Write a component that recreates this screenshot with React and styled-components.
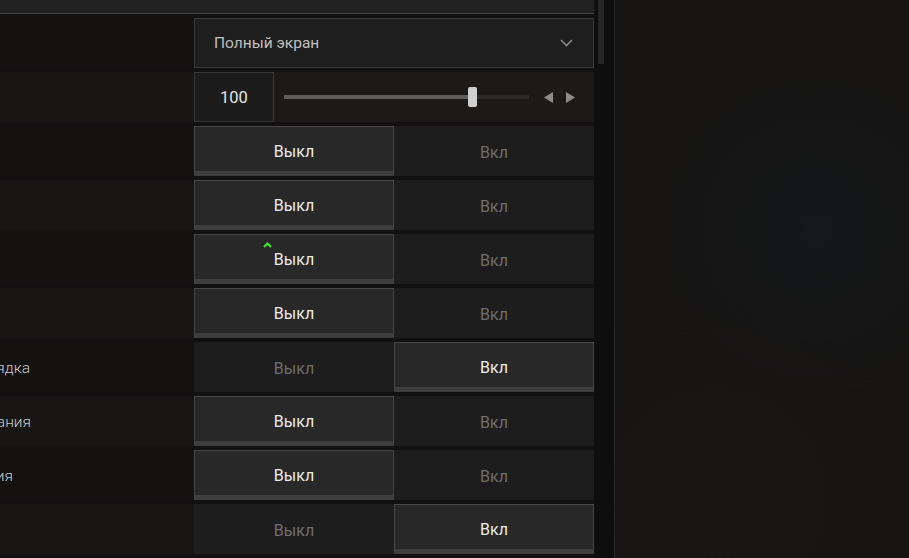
import styled, { createGlobalStyle } from 'styled-components';

const toggles = [
    { label: 'Ограничение частоты кадров', end: 30, on: false, hidden: true },
    { label: 'Тени', end: 30, on: false, hidden: true },
    { label: 'Подсказки', end: 30, on: false, hidden: true, cursor: true },
    { label: 'Эффекты', end: 30, on: false, hidden: true },
    { label: 'Быстрая перезарядка', end: 30, on: true },
    { label: 'Подсветка прицеливания', end: 31, on: false },
    { label: 'Анимация', end: 13, on: false },
    { label: 'Автоподбор', end: 30, on: true, hidden: true },
];

export default function App() {
    return (
        <>
            <GlobalStyle />
            <Page>
                <Panel>
                    <Header />
                    <List>
                        <Row>
                            <Label />
                            <Select>
                                <span>Полный экран</span>
                                <svg width="13" height="8" viewBox="0 0 13 8">
                                    <path d="M1 1l5.5 5.5L12 1" fill="none" stroke="#8a8a8a" strokeWidth="1.6" />
                                </svg>
                            </Select>
                        </Row>
                        <Row alt>
                            <Label />
                            <SliderBox>
                                <NumberBox>100</NumberBox>
                                <Track>
                                    <Fill style={{ width: `${(188 / 245) * 100}%` }} />
                                    <Thumb style={{ left: `${(184 / 245) * 100}%` }} />
                                </Track>
                                <Arrows>
                                    <svg width="10" height="11" viewBox="0 0 10 11">
                                        <path d="M9 0v11L0 5.5z" fill="#8c8c8c" />
                                    </svg>
                                    <svg width="10" height="11" viewBox="0 0 10 11">
                                        <path d="M1 0v11l9-5.5z" fill="#8c8c8c" />
                                    </svg>
                                </Arrows>
                            </SliderBox>
                        </Row>
                        {toggles.map((t, i) => (
                            <Row key={i} alt={i % 2 === 1}>
                                <Label end={t.end}>{t.hidden ? '' : t.label}</Label>
                                <Toggle>
                                    <Half active={!t.on}>
                                        {t.cursor && (
                                            <Caret width="9" height="6" viewBox="0 0 9 6">
                                                <path d="M1 5l3.5-3.5L8 5" fill="none" stroke="#3cf01e" strokeWidth="2" />
                                            </Caret>
                                        )}
                                        Выкл
                                    </Half>
                                    <Half active={t.on}>Вкл</Half>
                                </Toggle>
                            </Row>
                        ))}
                    </List>
                </Panel>
                <Scroll>
                    <ScrollThumb />
                </Scroll>
                <Backdrop />
            </Page>
        </>
    );
}

const GlobalStyle = createGlobalStyle`
    html, body {
        margin: 0;
        padding: 0;
        background: #131211;
        overflow: hidden;
    }
    body {
        font-family: Roboto, "Noto Sans", sans-serif;
    }
`;

const Page = styled.div`
    display: flex;
    width: 909px;
    height: 558px;
    background: #131110;
    overflow: hidden;
`;

const Panel = styled.div`
    width: 594px;
    flex-shrink: 0;
    display: flex;
    flex-direction: column;
    background: #121010;
`;

const Header = styled.div`
    height: 13px;
    background: #222121;
    border-bottom: 1px solid #474646;
    flex-shrink: 0;
`;

const List = styled.div`
    display: flex;
    flex-direction: column;
    gap: 4px;
    padding-top: 4px;
`;

const Row = styled.div`
    display: grid;
    grid-template-columns: 194px 400px;
    height: 50px;
    background: ${(p) => (p.alt ? '#181615' : '#141211')};
`;

const Label = styled.div`
    overflow: hidden;
    display: flex;
    align-items: center;
    justify-content: flex-end;
    white-space: nowrap;
    padding: 2px ${(p) => 194 - (p.end || 0)}px 0 0;
    color: #cacaca;
    font-size: 15.5px;
    font-weight: 300;
`;

const Select = styled.div`
    display: flex;
    align-items: center;
    justify-content: space-between;
    padding: 0 20px 0 19px;
    background: #1e1e1e;
    border: 1px solid #3b3b3b;
    color: #c0c0c0;
    font-size: 15.5px;
`;

const SliderBox = styled.div`
    display: flex;
    align-items: center;
    background: #1b1a19;
`;

const NumberBox = styled.div`
    width: 80px;
    height: 50px;
    box-sizing: border-box;
    display: flex;
    align-items: center;
    justify-content: center;
    background: #1c1c1c;
    border: 1px solid #373737;
    color: #e4e4e4;
    font-size: 16.5px;
`;

const Track = styled.div`
    position: relative;
    margin-left: 10px;
    width: 245px;
    height: 4px;
    background: #2a2928;
`;

const Fill = styled.div`
    height: 100%;
    background: #5c5c5c;
`;

const Thumb = styled.div`
    position: absolute;
    top: -8px;
    width: 9px;
    height: 20px;
    border-radius: 2px;
    background: #cfcfcf;
`;

const Arrows = styled.div`
    display: flex;
    gap: 11px;
    margin-left: 15px;
`;

const Toggle = styled.div`
    display: grid;
    grid-template-columns: 1fr 1fr;
    background: #1d1d1d;
`;

const Half = styled.div`
    position: relative;
    display: flex;
    align-items: center;
    justify-content: center;
    box-sizing: border-box;
    font-size: 16px;
    color: ${(p) => (p.active ? '#ececec' : '#6e6e6e')};
    background: ${(p) => (p.active ? '#282828' : 'transparent')};
    border: 1px solid ${(p) => (p.active ? '#474747' : 'transparent')};
    border-bottom: ${(p) => (p.active ? '5px solid #3e3e3e' : '0')};
    padding-top: ${(p) => (p.active ? '5px' : '2px')};
`;

const Caret = styled.svg`
    position: absolute;
    left: 68px;
    top: 7px;
`;

const Scroll = styled.div`
    width: 21px;
    box-sizing: border-box;
    flex-shrink: 0;
    display: flex;
    padding-left: 4px;
    background: #0e0e0e;
    border-right: 1px solid #262626;
`;

const ScrollThumb = styled.div`
    width: 6px;
    height: 64px;
    background: #262626;
`;

const Backdrop = styled.div`
    flex: 1;
    background:
        radial-gradient(circle at 200px 230px, #161819 0%, transparent 45%),
        radial-gradient(circle at 100px 500px, #1a1614 0%, transparent 40%),
        #151413;
`;
